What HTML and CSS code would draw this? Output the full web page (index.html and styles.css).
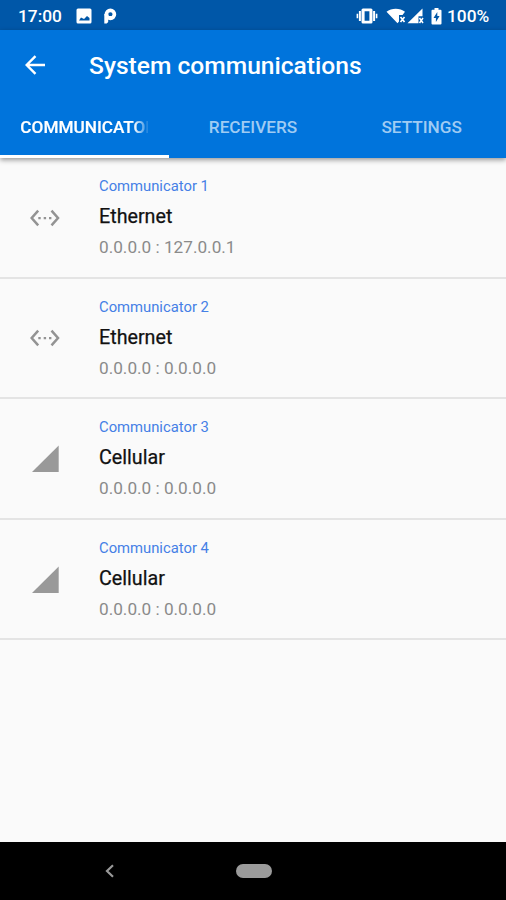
FILE: index.html
```html
<!DOCTYPE html>
<html lang="en">
<head>
<meta charset="utf-8">
<title>System communications</title>
<link rel="stylesheet" href="styles.css">
</head>
<body>
<div class="screen">
  <div class="status">
    <span class="clock">17:00</span>
    <svg class="s-photo" width="16" height="16" viewBox="0 0 16 16"><path fill="#fff" fill-rule="evenodd" d="M2 0.500h12a1.500 1.500 0 0 1 1.500 1.500v12a1.500 1.500 0 0 1-1.500 1.500H2a1.500 1.500 0 0 1-1.500-1.500V2A1.500 1.500 0 0 1 2 .5zM3 12.500h10.500V10L11 8l-3 3-3-1.500z"/></svg>
    <svg class="s-p" width="14" height="16" viewBox="0 0 14 16"><circle cx="7.400" cy="6.300" r="4" fill="none" stroke="#fff" stroke-width="3.700"/><path fill="#fff" d="M1.300 6h3.900v8l-1.500 1.500H1.300zM6 8h2v4H6z"/></svg>
    <span class="grow"></span>
    <svg class="s-vib" width="22" height="16" viewBox="0 0 22 16"><path fill="#fff" fill-rule="evenodd" d="M7 .5h8a1.500 1.500 0 0 1 1.500 1.500v12a1.500 1.500 0 0 1-1.500 1.500H7A1.500 1.500 0 0 1 5.500 14V2A1.500 1.500 0 0 1 7 .5zM8.600 3.200v9.600h4.800V3.200z"/><path fill="#fff" d="M2.900 3h2v10h-2zM.6 5.800h1.600v4.400H.6zM17.100 3h2v10h-2zM19.800 5.800h1.600v4.400h-1.600z"/></svg>
    <svg class="s-wifi" width="20" height="16" viewBox="0 0 20 16"><path fill="#fff" d="M.5 3.800C5.500-.2 14-.2 19 3.800L16.500 7H13v6.500L11.500 15.200z"/><path d="M14.500 9l4 5m0-5l-4 5" stroke="#fff" stroke-width="1.700"/></svg>
    <svg class="s-cell" width="17" height="16" viewBox="0 0 17 16"><path fill="#fff" d="M.5 15.300L15.500.5v7.700h-4v7.100z"/><path d="M12.500 10l3.500 5m0-5l-3.500 5" stroke="#fff" stroke-width="1.500"/></svg>
    <svg class="s-bat" width="11" height="17" viewBox="0 0 11 17"><path fill="#fff" fill-rule="evenodd" d="M3.500 0h4v1.700H9.500a1 1 0 0 1 1 1V15.500a1 1 0 0 1-1 1h-8a1 1 0 0 1-1-1V2.700a1 1 0 0 1 1-1h2zM6.300 4L2.500 10h2.400v4L8.600 8H6.300z"/></svg>
    <span class="pct">100%</span>
  </div>
  <header class="bar">
    <div class="toolbar">
      <svg width="22" height="22" viewBox="0 0 22 22" fill="none" stroke="#fff" stroke-width="2.400"><path d="M21 11H3.500M11.500 2.200L2.700 11l8.800 8.800"/></svg>
      <h1>System communications</h1>
    </div>
    <nav class="tabs">
      <div class="tab active"><span class="clip">COMMUNICATORS</span></div>
      <div class="tab"><span>RECEIVERS</span></div>
      <div class="tab"><span>SETTINGS</span></div>
    </nav>
  </header>
  <main class="list">
    <div class="row">
      <svg class="icon" width="30" height="30" viewBox="0 0 30 30"><path d="M8.200 7.700L1.700 15l6.500 7.300M21.500 7.700L28 15l-6.500 7.300" fill="none" stroke="#939393" stroke-width="2.500"/><path fill="#939393" d="M8.300 13.900h2.400v2.400H8.300zM13.700 13.900h2.400v2.400h-2.400zM19 13.900h2.400v2.400H19z"/></svg>
      <div class="text"><div class="name">Communicator 1</div><div class="type">Ethernet</div><div class="addr">0.0.0.0 : 127.0.0.1</div></div>
    </div>
    <div class="row">
      <svg class="icon" width="30" height="30" viewBox="0 0 30 30"><path d="M8.200 7.700L1.700 15l6.500 7.300M21.500 7.700L28 15l-6.500 7.300" fill="none" stroke="#939393" stroke-width="2.500"/><path fill="#939393" d="M8.300 13.900h2.400v2.400H8.300zM13.700 13.900h2.400v2.400h-2.400zM19 13.900h2.400v2.400H19z"/></svg>
      <div class="text"><div class="name">Communicator 2</div><div class="type">Ethernet</div><div class="addr">0.0.0.0 : 0.0.0.0</div></div>
    </div>
    <div class="row">
      <svg class="icon" width="30" height="30" viewBox="0 0 30 30"><path fill="#999" d="M2 28L28.700 1.500V28z"/></svg>
      <div class="text"><div class="name">Communicator 3</div><div class="type">Cellular</div><div class="addr">0.0.0.0 : 0.0.0.0</div></div>
    </div>
    <div class="row">
      <svg class="icon" width="30" height="30" viewBox="0 0 30 30"><path fill="#999" d="M2 28L28.700 1.500V28z"/></svg>
      <div class="text"><div class="name">Communicator 4</div><div class="type">Cellular</div><div class="addr">0.0.0.0 : 0.0.0.0</div></div>
    </div>
  </main>
  <footer class="nav">
    <svg class="back" width="10" height="14" viewBox="0 0 10 14"><path d="M8 1.200L2 7l6 5.800" fill="none" stroke="#999" stroke-width="2.200"/></svg>
    <span class="home"></span>
  </footer>
</div>
</body>
</html>
```
FILE: styles.css
```css
* { box-sizing: border-box; }
body { margin: 0; font-family: Roboto, "Liberation Sans", sans-serif; }
.screen { width: 506px; height: 900px; display: flex; flex-direction: column; background: #fafafa; overflow: hidden; }
.status { height: 30px; flex: none; background: #0057a8; color: #fff; display: flex; align-items: center; padding: 2px 16px 0 18px; font-size: 17.3px; font-weight: 500; line-height: 28px; }
.status svg { flex: none; }
.clock { width: 58px; }
.s-p { margin-left: 11px; }
.grow { flex: 1; }
.s-wifi { margin-left: 8px; }
.s-cell { margin-left: 1px; }
.s-bat { margin-left: 7px; }
.pct { width: 43px; margin-left: 5px; white-space: nowrap; }
.bar { height: 128px; flex: none; background: #0074dc; color: #fff; box-shadow: 0 2px 5px rgba(0, 0, 0, .4); position: relative; }
.toolbar { height: 68px; display: flex; align-items: center; padding: 1px 0 0 24px; }
h1 { margin: 2px 0 0 43px; font-size: 24.6px; line-height: 32px; font-weight: 500; white-space: nowrap; }
.tabs { display: grid; grid-template-columns: repeat(3, 1fr); height: 60px; }
.tab { display: flex; align-items: center; justify-content: center; font-size: 17.2px; font-weight: 500; color: #9fcbf3; padding: 1px 20px 0; border-bottom: 3px solid transparent; }
.tab.active { color: #fff; border-bottom-color: #fff; }
.clip { width: 128px; overflow: hidden; white-space: nowrap; -webkit-text-stroke: .2px #fff; mask-image: linear-gradient(to right, #000 114px, transparent 130px); }
.list { flex: 1; }
.row { height: 120.6px; display: flex; align-items: center; padding: 1px 0 0 30px; border-bottom: 2px solid #e4e4e4; }
.text { margin-left: 39px; }
.name { font-size: 14.8px; line-height: 20px; color: #4580e6; }
.type { font-size: 19.7px; line-height: 26px; margin-top: 8px; color: #111; -webkit-text-stroke: .25px #111; }
.addr { font-size: 17.2px; line-height: 24px; margin-top: 5px; color: #8a8a8a; }
.nav { height: 58px; flex: none; background: #000; display: flex; align-items: center; padding-left: 105px; }
.home { width: 36px; height: 14px; border-radius: 7px; background: #9b9b9b; margin-left: 121px; }
```
